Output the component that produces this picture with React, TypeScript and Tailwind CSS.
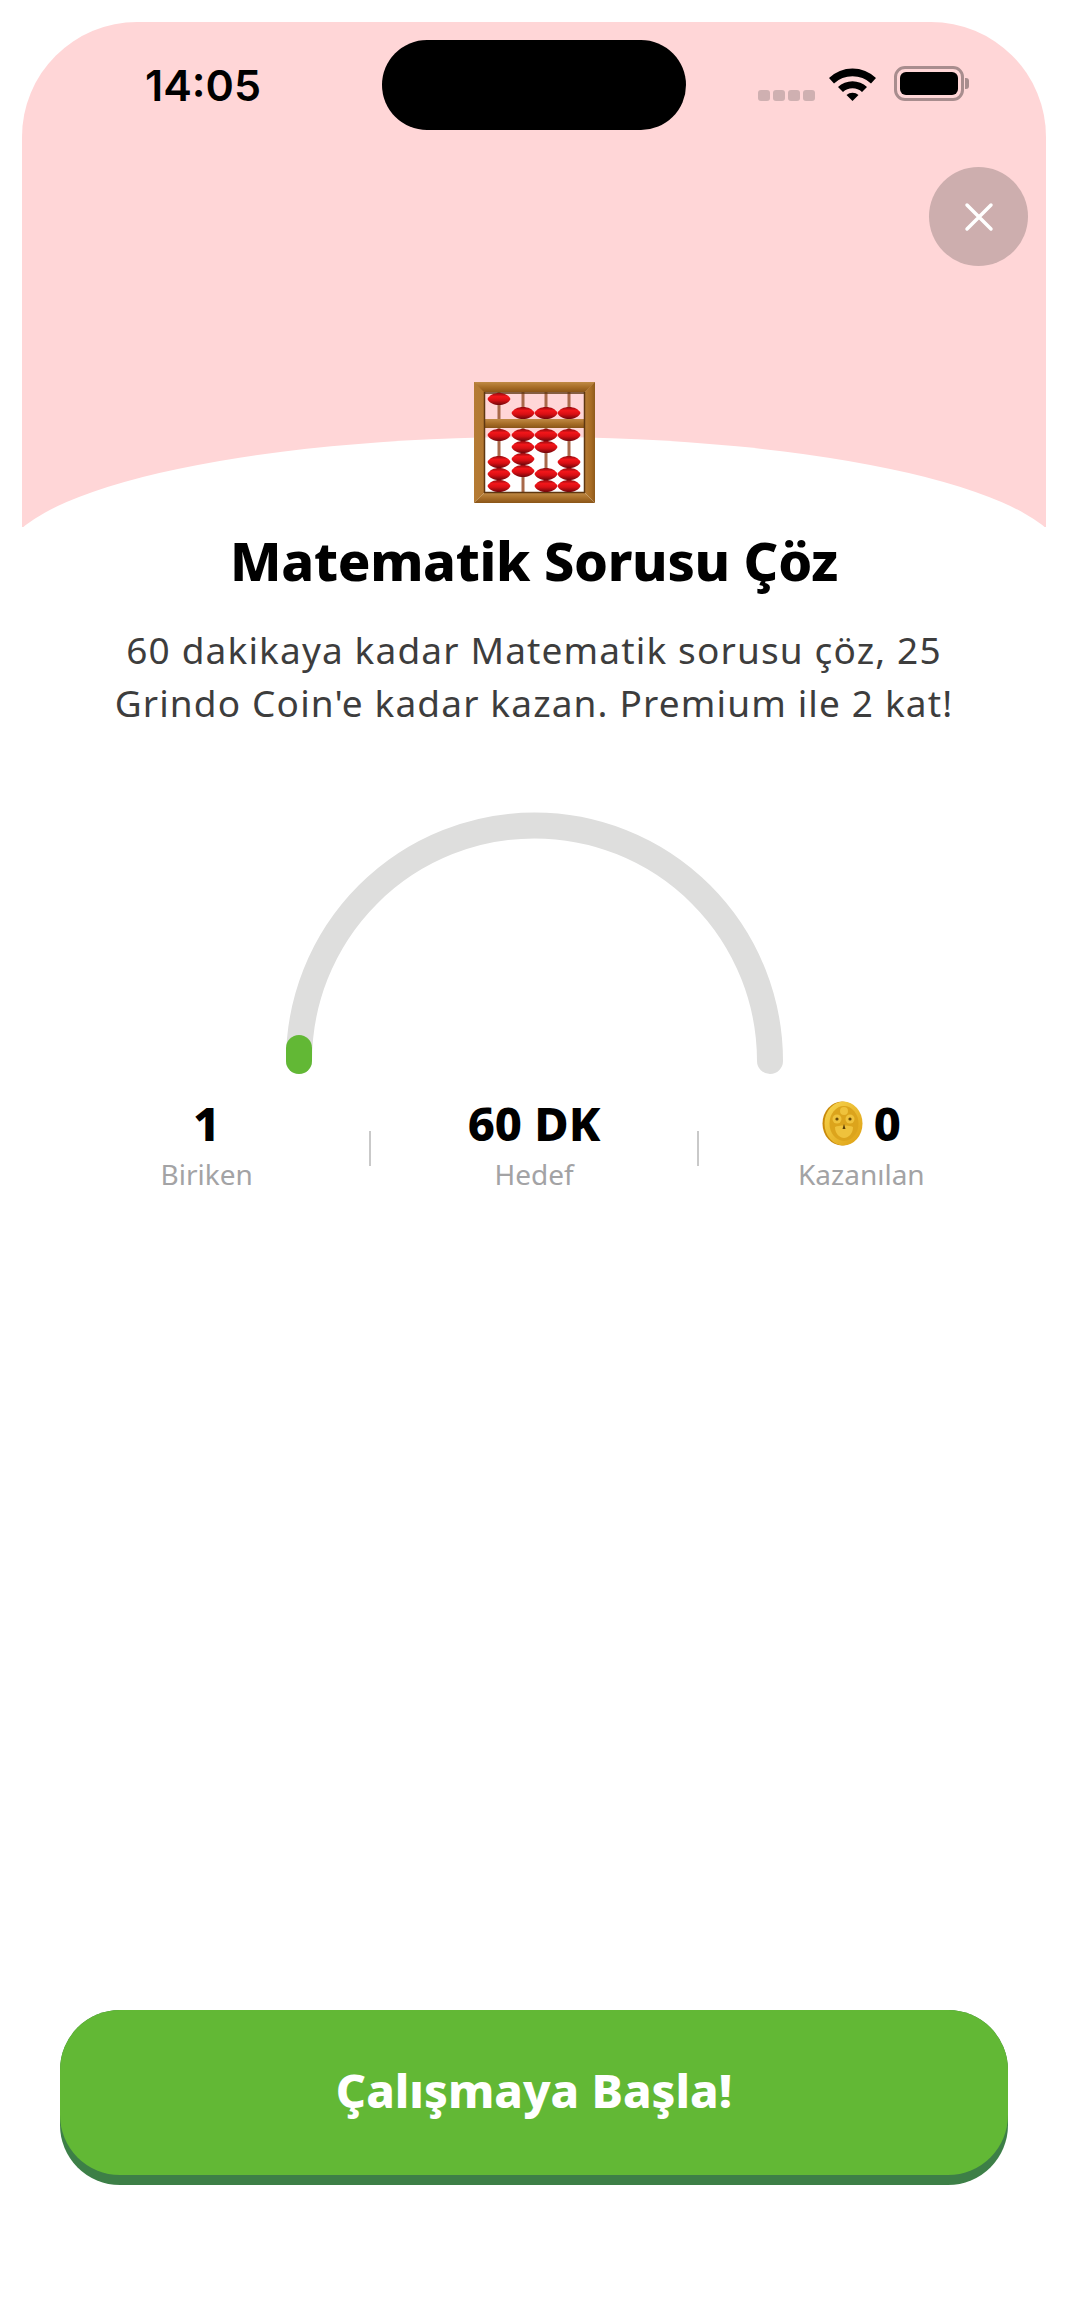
const abacusBeads = [
  [25, 17], [49, 31], [72, 31], [95, 31],
  [25, 53], [25, 80], [25, 92], [25, 104],
  [49, 53], [49, 65], [49, 77], [49, 89],
  [72, 53], [72, 65], [72, 92], [72, 104],
  [95, 53], [95, 80], [95, 92], [95, 104],
];

function Abacus() {
  return (
    <svg width="121" height="121" viewBox="0 0 121 121" className="shrink-0">
      <defs>
        <linearGradient id="bead" x1="0" y1="0" x2="0" y2="1">
          <stop offset="0" stopColor="#8f0a0e" />
          <stop offset="0.3" stopColor="#f3161a" />
          <stop offset="0.6" stopColor="#d80f14" />
          <stop offset="1" stopColor="#6f070b" />
        </linearGradient>
        <linearGradient id="woodH" x1="0" y1="0" x2="0" y2="1">
          <stop offset="0" stopColor="#c08a45" />
          <stop offset="0.5" stopColor="#a86e28" />
          <stop offset="1" stopColor="#8a5518" />
        </linearGradient>
        <linearGradient id="woodV" x1="0" y1="0" x2="1" y2="0">
          <stop offset="0" stopColor="#b57b34" />
          <stop offset="0.6" stopColor="#a86c24" />
          <stop offset="1" stopColor="#8f5a1b" />
        </linearGradient>
      </defs>
      {[25, 49, 72, 95].map((x) => (
        <rect key={x} x={x - 1.5} y="10" width="3" height="100" fill="#a8694a" />
      ))}
      <rect x="9" y="37" width="103" height="9" fill="url(#woodH)" />
      <path d="M0 0H121L111 10H10V111L0 121Z" fill="url(#woodV)" />
      <path d="M0 0H121L111 10H10Z" fill="url(#woodH)" />
      <path d="M121 0V121L111 111V10Z" fill="url(#woodV)" />
      <path d="M0 121H121L111 111H10Z" fill="url(#woodH)" />
      <path d="M10 11H111M10.5 10V111M10 110.5H111M110.5 10V111" stroke="#5e3710" strokeWidth="1.5" fill="none" />
      {abacusBeads.map(([x, y]) => (
        <path
          key={`${x}-${y}`}
          d={`M${x - 11.5} ${y}C${x - 8} ${y - 8} ${x + 8} ${y - 8} ${x + 11.5} ${y}C${x + 8} ${y + 8} ${x - 8} ${y + 8} ${x - 11.5} ${y}Z`}
          fill="url(#bead)"
        />
      ))}
    </svg>
  );
}

function Coin() {
  return (
    <svg width="42" height="45" viewBox="0 0 42 45" className="shrink-0">
      <defs>
        <linearGradient id="coin" x1="0" y1="0" x2="1" y2="1">
          <stop offset="0" stopColor="#f8d650" />
          <stop offset="1" stopColor="#dd9f12" />
        </linearGradient>
      </defs>
      <ellipse cx="20" cy="22.5" rx="19.5" ry="22" fill="#c98a0a" />
      <ellipse cx="21.5" cy="22.5" rx="19" ry="22" fill="url(#coin)" />
      <ellipse cx="22" cy="22.5" rx="14.5" ry="17.5" fill="#dca41c" />
      <circle cx="22" cy="10" r="4" fill="#efc23c" />
      <circle cx="15" cy="18" r="4.5" fill="#efc23c" />
      <circle cx="28" cy="18" r="4.5" fill="#efc23c" />
      <circle cx="15" cy="18" r="1.6" fill="#6b4a08" />
      <circle cx="28" cy="18" r="1.6" fill="#6b4a08" />
      <path d="M13 26C17 24 27 24 31 26C31 33 26 37 22 37C18 37 13 33 13 26Z" fill="#efc23c" />
      <path d="M22 23L23.5 28H20.5Z" fill="#5a3d06" />
    </svg>
  );
}

function Stat({ value, label, coin }: { value: string; label: string; coin?: boolean }) {
  return (
    <div className="flex-1 flex flex-col items-center">
      <div className="flex items-center justify-center gap-[10px] h-[46px]">
        {coin && <Coin />}
        <span className="text-[47px] leading-[46px] font-extrabold text-black">{value}</span>
      </div>
      <span className="mt-[10px] text-[28px] leading-[36px] text-[#a3a3a5]">{label}</span>
    </div>
  );
}

export default function App() {
  return (
    <div className="w-[1068px] h-[2314px] bg-white flex flex-col font-['Noto_Sans',sans-serif]">
      <div className="mx-[22px] mt-[22px] h-[505px] relative overflow-hidden bg-[#ffd6d7] rounded-t-[115px] shrink-0">
        <div className="absolute left-[-18px] top-[415px] w-[1060px] h-[246px] rounded-[50%] bg-white" />
        <div className="relative flex items-center h-[90px] mt-[18px]">
          <span className="ml-[123px] w-[115px] text-[43px] leading-none font-semibold text-black font-['Inter',sans-serif]">
            14:05
          </span>
          <div className="ml-[122px] w-[304px] h-[90px] rounded-[45px] bg-black" />
          <div className="ml-[72px] flex gap-[3px] mt-[20px]">
            <span className="w-[12px] h-[11px] rounded-[3px] bg-[#cfb0b1]" />
            <span className="w-[12px] h-[11px] rounded-[3px] bg-[#cfb0b1]" />
            <span className="w-[12px] h-[11px] rounded-[3px] bg-[#cfb0b1]" />
            <span className="w-[12px] h-[11px] rounded-[3px] bg-[#cfb0b1]" />
          </div>
          <svg width="47" height="35" viewBox="0 0 47 35" className="ml-[14px] mb-[4px]">
            <path d="M0 12A34 34 0 0 1 47 12L42 17.5A27 27 0 0 0 5 17.5Z" fill="#000" />
            <path d="M9 21A21 21 0 0 1 38 21L33 26A14 14 0 0 0 14 26Z" fill="#000" />
            <path d="M17.5 29A9 9 0 0 1 29.5 29L23.5 35Z" fill="#000" />
          </svg>
          <div className="ml-[18px] mb-[4px] flex items-center">
            <div className="w-[70px] h-[35px] rounded-[11px] border-[3px] border-[#a88d8e] p-[3px]">
              <div className="w-full h-full rounded-[6px] bg-black" />
            </div>
            <div className="ml-[1px] w-[4px] h-[11px] rounded-r-[3px] bg-[#a88d8e]" />
          </div>
        </div>
        <button className="absolute left-[907px] top-[145px] w-[99px] h-[99px] rounded-full bg-[#cdaeae] flex items-center justify-center">
          <svg width="30" height="30" viewBox="0 0 30 30">
            <path d="M3 3L27 27M27 3L3 27" stroke="#fff" strokeWidth="3.5" strokeLinecap="round" />
          </svg>
        </button>
      </div>

      <div className="relative -mt-[145px] flex flex-col items-center">
        <Abacus />
        <h1 className="mt-[21px] text-[54px] leading-[72px] font-extrabold tracking-[-0.3px] text-black">
          Matematik Sorusu Çöz
        </h1>
        <p className="mt-[27px] w-[900px] text-center text-[37px] leading-[53px] tracking-[1.15px] text-[#3d3d3d]">
          60 dakikaya kadar Matematik sorusu çöz, 25
          <br />
          Grindo Coin'e kadar kazan. Premium ile 2 kat!
        </p>
        <svg width="522" height="274" viewBox="0 0 522 274" className="mt-[71px]">
          <path d="M26 261A235.5 235.5 0 0 1 497 261" fill="none" stroke="#dededd" strokeWidth="26" strokeLinecap="round" />
          <path d="M26 248V261" fill="none" stroke="#62b835" strokeWidth="26" strokeLinecap="round" />
        </svg>
        <div className="mt-[26px] w-[980px] flex">
          <Stat value="1" label="Biriken" />
          <div className="w-[2px] h-[35px] mt-[31px] bg-[#c9c9c9]" />
          <Stat value="60 DK" label="Hedef" />
          <div className="w-[2px] h-[35px] mt-[31px] bg-[#c9c9c9]" />
          <Stat value="0" label="Kazanılan" coin />
        </div>
      </div>

      <div className="mt-auto mb-[129px] mx-[60px] h-[175px] rounded-[60px] bg-[#3d7f47] shrink-0">
        <div className="h-[165px] rounded-[60px] bg-[#62b835] flex items-center justify-center pb-[4px] text-[47px] font-extrabold text-white">
          Çalışmaya Başla!
        </div>
      </div>
    </div>
  );
}
